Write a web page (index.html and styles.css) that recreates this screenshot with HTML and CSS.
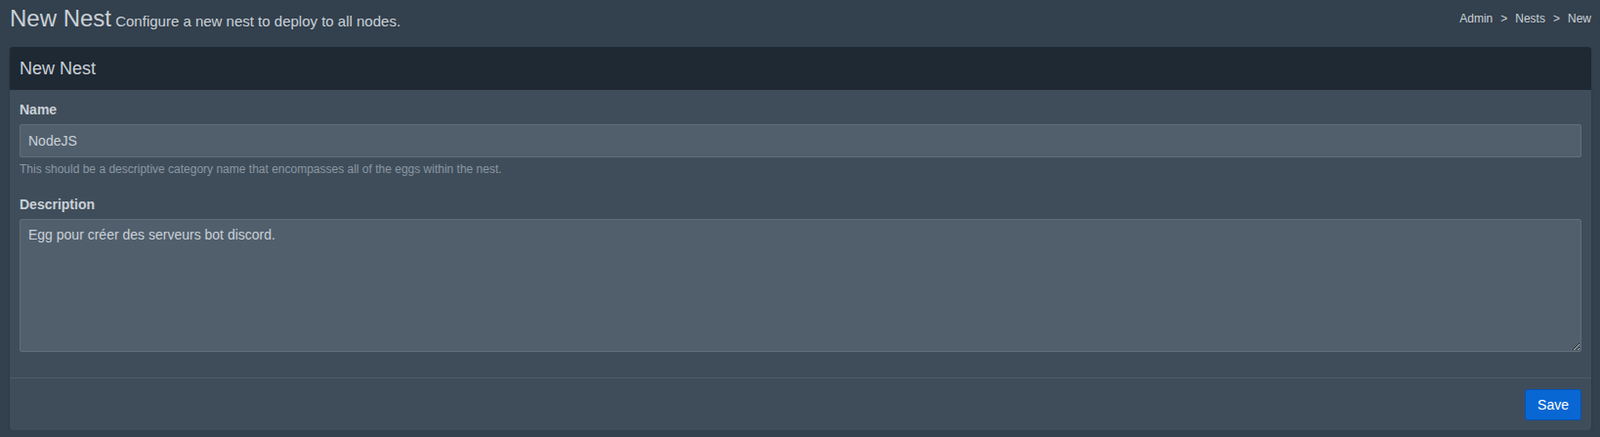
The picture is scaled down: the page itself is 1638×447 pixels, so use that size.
FILE: index.html
```html
<!DOCTYPE html>
<html lang="en">
<head>
    <meta charset="UTF-8">
    <title>New Nest</title>
    <link rel="stylesheet" href="styles.css">
</head>
<body>
    <div id="content">
        <div class="content-header">
            <h1>New Nest<small> Configure a new nest to deploy to all nodes.</small></h1>
            <ol class="breadcrumb">
                <li>Admin</li>
                <li>Nests</li>
                <li class="active">New</li>
            </ol>
        </div>
        <div class="box">
            <div class="box-header">
                <h3 class="box-title">New Nest</h3>
            </div>
            <div class="box-body">
                <div class="form-group">
                    <label class="control-label">Name</label>
                    <input type="text" class="form-control" value="NodeJS">
                    <p class="help-block">This should be a descriptive category name that encompasses all of the eggs within the nest.</p>
                </div>
                <div class="form-group">
                    <label class="control-label">Description</label>
                    <textarea class="form-control" rows="6">Egg pour créer des serveurs bot discord.</textarea>
                </div>
            </div>
            <div class="box-footer">
                <button class="btn btn-primary">Save</button>
            </div>
        </div>
    </div>
</body>
</html>
```

FILE: styles.css
```css
body {
    font-family: "Liberation Sans", Arial, sans-serif;
    background-color: #33404d;
    color: #cad1d8;
    margin: 0;
    padding: 0;
    font-size: 14px;
}

#content {
    padding: 0 9px 0 10px;
}

.content-header {
    display: flex;
    justify-content: space-between;
    align-items: flex-start;
    height: 48px;
}

.content-header h1 {
    margin: 0;
    padding-top: 6px;
    font-size: 24px;
    font-weight: normal;
    line-height: 26px;
    color: #cad1d8;
}

.content-header h1 small {
    font-size: 15px;
    color: #cad1d8;
}

.breadcrumb {
    list-style: none;
    margin: 0;
    padding: 11px 0 0;
    display: flex;
    font-size: 12px;
    line-height: 17px;
    color: #cad1d8;
}

.breadcrumb li + li:before {
    content: ">";
    padding: 0 8px;
    color: #cad1d8;
}

.box {
    background-color: #3f4d5a;
    border-radius: 3px;
    box-shadow: 0 1px 2px rgba(0, 0, 0, 0.25);
}

.box-header {
    background-color: #1f2933;
    height: 44px;
    padding: 0 10px;
    display: flex;
    align-items: center;
    border-radius: 3px 3px 0 0;
}

.box-title {
    margin: 0;
    font-size: 18px;
    font-weight: normal;
    color: #cad1d8;
}

.box-body {
    padding: 10px 10px 11px;
}

.form-group {
    margin-bottom: 18px;
}

.form-group:last-child {
    margin-bottom: 15px;
}

.control-label {
    display: block;
    font-weight: bold;
    font-size: 14px;
    line-height: 20px;
    margin-bottom: 5px;
    color: #cad1d8;
}

.form-control {
    display: block;
    width: 100%;
    box-sizing: border-box;
    height: 34px;
    padding: 6px 8px;
    font-family: "Liberation Sans", Arial, sans-serif;
    font-size: 14px;
    color: #cad1d8;
    background-color: #515f6c;
    border: 1px solid #606d7b;
    border-radius: 2px;
    outline: none;
}

textarea.form-control {
    height: 136px;
    line-height: 20px;
    padding: 5px 8px;
}

.help-block {
    margin: 4px 0 0;
    font-size: 12px;
    line-height: 16px;
    color: #8b97a3;
}

.box-footer {
    border-top: 1px solid #4d5a67;
    padding: 11px 10px 10px;
    display: flex;
    justify-content: flex-end;
}

.btn {
    height: 32px;
    padding: 0 12px;
    font-family: "Liberation Sans", Arial, sans-serif;
    font-size: 14px;
    border-radius: 3px;
    cursor: pointer;
}

.btn-primary {
    background-color: #0967d3;
    border: 1px solid #0552b5;
    color: #ffffff;
}
```
